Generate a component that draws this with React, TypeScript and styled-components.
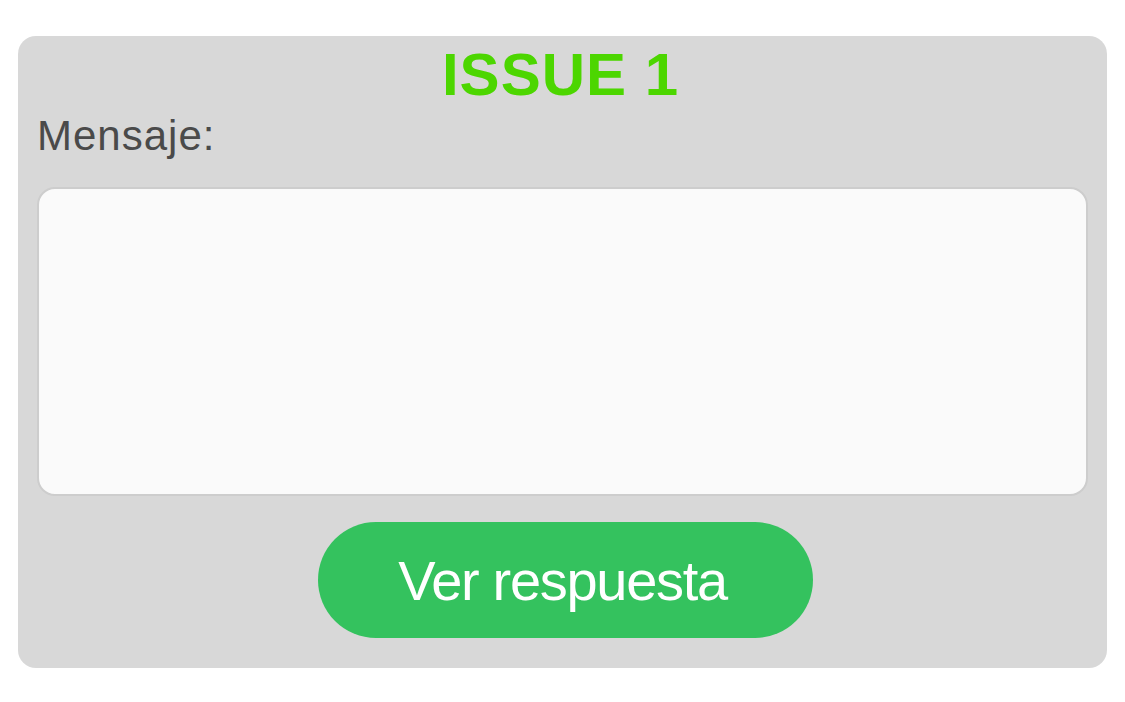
import React from 'react';
import styled, { createGlobalStyle } from 'styled-components';

const GlobalStyle = createGlobalStyle`
  html, body {
    margin: 0;
    padding: 0;
    background: #ffffff;
    font-family: "Liberation Sans", Arial, Helvetica, sans-serif;
  }
`;

const Page = styled.div`
  padding: 36px 18px 0 18px;
  width: 1089px;
`;

const Card = styled.section`
  background-color: #d8d8d8;
  border-radius: 18px;
  padding: 9px 19px 30px 19px;
  display: flex;
  flex-direction: column;
`;

const Title = styled.h1`
  margin: 0;
  padding-right: 4px;
  font-size: 60px;
  line-height: 60px;
  font-weight: 700;
  letter-spacing: 1px;
  color: #4cd600;
  text-align: center;
`;

const Label = styled.label`
  margin-top: 10px;
  font-size: 42px;
  line-height: 42px;
  color: #4a4a4a;
  letter-spacing: 1px;
`;

const MessageBox = styled.textarea`
  margin-top: 30px;
  height: 309px;
  box-sizing: border-box;
  border: 2px solid #cdcdcd;
  border-radius: 18px;
  background-color: #fafafa;
  resize: none;
  outline: none;
  font-family: inherit;
  font-size: 32px;
  padding: 16px;
`;

const ButtonRow = styled.div`
  display: flex;
  justify-content: center;
  margin-top: 26px;
  padding-left: 6px;
`;

const AnswerButton = styled.button`
  width: 495px;
  height: 116px;
  border: none;
  border-radius: 58px;
  background-color: #34c25e;
  color: #ffffff;
  font-family: "Liberation Sans", Arial, Helvetica, sans-serif;
  font-size: 56px;
  letter-spacing: -1.3px;
  cursor: pointer;
  padding: 0 0 0 0;
  padding-right: 6px;
`;

const App: React.FC = () => {
  return (
    <>
      <GlobalStyle />
      <Page>
        <Card>
          <Title>ISSUE 1</Title>
          <Label htmlFor="mensaje">Mensaje:</Label>
          <MessageBox id="mensaje" />
          <ButtonRow>
            <AnswerButton>Ver respuesta</AnswerButton>
          </ButtonRow>
        </Card>
      </Page>
    </>
  );
};

export default App;
